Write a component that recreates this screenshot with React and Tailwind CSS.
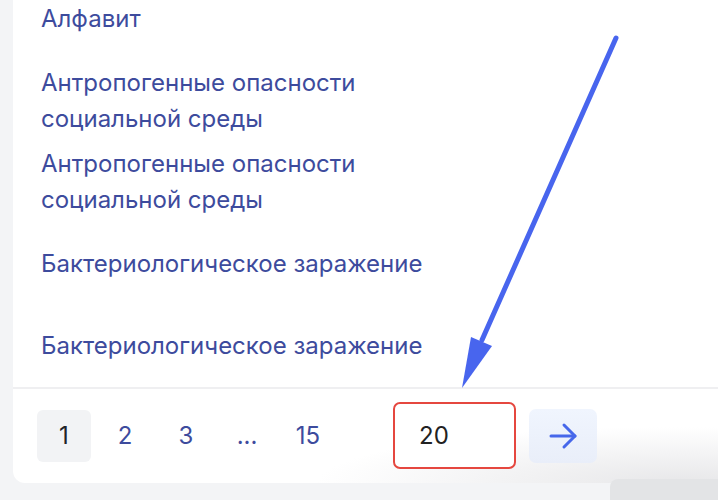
import React from 'react'

const items = [
  'Алфавит',
  'Антропогенные опасности социальной среды',
  'Антропогенные опасности социальной среды',
  'Бактериологическое заражение',
  'Бактериологическое заражение',
]

const pages = ['1', '2', '3', '...', '15']

export default function App() {
  return (
    <div className="relative h-[500px] w-[718px] overflow-hidden bg-[#f3f4f6] pl-[13px]" style={{ fontFamily: 'Inter, "Noto Sans", sans-serif' }}>
      <div className="relative h-[483px] w-[720px] overflow-hidden rounded-bl-[12px] bg-white">
        {/* list */}
        <div className="mt-[-22px] pl-[28px] pr-6">
          {items.map((t, i) => (
            <div key={i} className="flex h-[81.75px] items-center">
              <p className="max-w-[400px] text-[24px] leading-[36px] text-[#3d4b9d]">{t}</p>
            </div>
          ))}
        </div>

        {/* pagination */}
        <div className="relative flex h-[96px] items-center border-t-2 border-[#efeff1] pl-[24px]">
          <div className="pointer-events-none absolute bottom-0 left-[200px] right-0 top-0 bg-[radial-gradient(ellipse_70%_60%_at_90%_100%,#e7e7e9,rgba(255,255,255,0))]"></div>
          <div className="relative flex items-center gap-[7px]">
            {pages.map((p, i) => (
              <div
                key={i}
                className={
                  i === 0
                    ? 'flex h-[52px] w-[54px] items-center justify-center rounded-[6px] bg-[#f2f3f5] text-[24px] text-[#1f2329]'
                    : 'flex h-[52px] w-[54px] items-center justify-center text-[24px] text-[#3d4b9d]'
                }
              >
                {p}
              </div>
            ))}
          </div>
          <div className="relative ml-[58px] flex h-[67px] w-[123px] items-center rounded-[7px] border-2 border-[#e5473f] bg-white pl-[24px] text-[24px] text-[#222]">
            20
          </div>
          <button className="relative ml-[13px] flex h-[54px] w-[68px] items-center justify-center rounded-[7px] bg-gradient-to-b from-[#f0f5fe] to-[#e9eef9]">
            <svg width="30" height="28" viewBox="0 0 30 28" fill="none" stroke="#4667ea" strokeWidth="3" strokeLinecap="round" strokeLinejoin="round">
              <path d="M3 14 H27" />
              <path d="M16 3 L27 14 L16 25" />
            </svg>
          </button>
        </div>
      </div>
      <div className="absolute bottom-0 left-[610px] right-0 h-[21px] rounded-tl-[8px] bg-[#e3e4e6]"></div>

      {/* annotation arrow */}
      <svg className="pointer-events-none absolute left-0 top-0" width="718" height="500" viewBox="0 0 718 500">
        <line x1="616" y1="38" x2="482" y2="340" stroke="#4865ee" strokeWidth="5" strokeLinecap="round" />
        <polygon points="462,388 471,337 492,346" fill="#4865ee" />
      </svg>
    </div>
  )
}
